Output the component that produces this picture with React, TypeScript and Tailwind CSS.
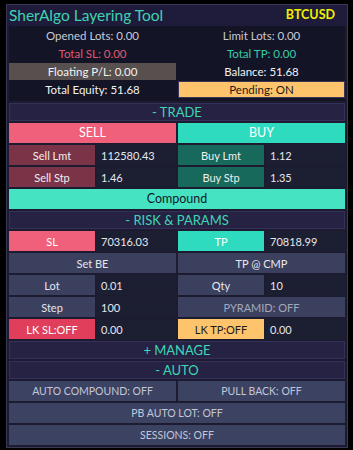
import React from "react";

const font = { fontFamily: "Lato, 'Noto Sans', sans-serif" };

function Header({ text }: { text: string }) {
  return (
    <div className="h-[18px] bg-[#262243] border border-[#34305a] flex items-center justify-center text-[#3fd6b6] text-[13px] leading-none">
      {text}
    </div>
  );
}

function LabelVal({ label, value, labelCls }: { label: string; value: string; labelCls: string }) {
  return (
    <div className="grid grid-cols-[86px_1fr] gap-[2px] h-[20px]">
      <div className={`flex items-center justify-center ${labelCls}`}>{label}</div>
      <div className="flex items-center pl-[4px] bg-[#1b1f31] text-[#e6e6ee]">{value}</div>
    </div>
  );
}

export default function App() {
  return (
    <div className="w-[353px] h-[450px] bg-black pt-[4px] pl-[6px] text-[11px] leading-none" style={font}>
      <div className="w-[342px] h-[444px] border border-[#3a3858] bg-[#1c1b2f] flex flex-col">
        <div className="h-[22px] bg-[#1f1b3a] flex items-center justify-between pl-[2px] pr-[12px]">
          <span className="text-[#3ed3b4] text-[15.5px]">SherAlgo Layering Tool</span>
          <span className="text-[#f2f000] text-[12.5px] font-bold">BTCUSD</span>
        </div>
        <div className="px-[2px] flex flex-col gap-[2px] flex-1 pb-[2px]">
          <div className="bg-[#131426] grid grid-cols-2 gap-x-[2px] gap-y-[1px] pt-[1px] pb-[3px] text-[11.5px]">
            <div className="h-[17px] flex items-center justify-center text-[#c9cad6]">Opened Lots: 0.00</div>
            <div className="h-[17px] flex items-center justify-center text-[#c9cad6]">Limit Lots: 0.00</div>
            <div className="h-[17px] flex items-center justify-center text-[#e2566e]">Total SL: 0.00</div>
            <div className="h-[17px] flex items-center justify-center text-[#39cbab]">Total TP: 0.00</div>
            <div className="h-[17px] flex items-center justify-center bg-[#57504f] text-[#f2f2f2]">Floating P/L: 0.00</div>
            <div className="h-[17px] flex items-center justify-center text-[#f2f2f2]">Balance: 51.68</div>
            <div className="h-[17px] flex items-center justify-center text-[#f2f2f2]">Total Equity: 51.68</div>
            <div className="h-[17px] flex items-center justify-center bg-[#fec46b] border border-[#3a3555] text-[#1a1a1a]">Pending: ON</div>
          </div>

          <Header text="- TRADE" />
          <div className="grid grid-cols-2 gap-[2px] h-[20px] text-[12.5px]">
            <div className="bg-[#f1607a] text-white flex items-center justify-center">SELL</div>
            <div className="bg-[#2edbbf] text-white flex items-center justify-center">BUY</div>
          </div>
          <div className="grid grid-cols-2 gap-[2px]">
            <LabelVal label="Sell Lmt" value="112580.43" labelCls="bg-[#7b3447] text-[#f0f0f0]" />
            <LabelVal label="Buy Lmt" value="1.12" labelCls="bg-[#17695b] text-[#f0f0f0]" />
          </div>
          <div className="grid grid-cols-2 gap-[2px]">
            <LabelVal label="Sell Stp" value="1.46" labelCls="bg-[#7b3447] text-[#f0f0f0]" />
            <LabelVal label="Buy Stp" value="1.35" labelCls="bg-[#17695b] text-[#f0f0f0]" />
          </div>
          <div className="h-[20px] bg-[#46e3c2] text-[#15172a] flex items-center justify-center text-[12.5px]">Compound</div>

          <Header text="- RISK & PARAMS" />
          <div className="grid grid-cols-2 gap-[2px]">
            <LabelVal label="SL" value="70316.03" labelCls="bg-[#f1607a] text-white" />
            <LabelVal label="TP" value="70818.99" labelCls="bg-[#2edbbf] text-white" />
          </div>
          <div className="grid grid-cols-2 gap-[2px] h-[20px]">
            <div className="bg-[#3b405f] text-[#e6e6ee] flex items-center justify-center">Set BE</div>
            <div className="bg-[#3b405f] text-[#e6e6ee] flex items-center justify-center">TP @ CMP</div>
          </div>
          <div className="grid grid-cols-2 gap-[2px]">
            <LabelVal label="Lot" value="0.01" labelCls="bg-[#3b405f] text-[#e6e6ee]" />
            <LabelVal label="Qty" value="10" labelCls="bg-[#3b405f] text-[#e6e6ee]" />
          </div>
          <div className="grid grid-cols-2 gap-[2px]">
            <LabelVal label="Step" value="100" labelCls="bg-[#3b405f] text-[#e6e6ee]" />
            <div className="h-[20px] bg-[#3b405f] text-[#a4a8bc] flex items-center justify-center">PYRAMID: OFF</div>
          </div>
          <div className="grid grid-cols-2 gap-[2px]">
            <LabelVal label="LK SL:OFF" value="0.00" labelCls="bg-[#e03e5a] text-white" />
            <LabelVal label="LK TP:OFF" value="0.00" labelCls="bg-[#fec46b] text-[#1a1a1a]" />
          </div>
          <Header text="+ MANAGE" />
          <Header text="- AUTO" />
          <div className="grid grid-cols-2 gap-[2px] h-[20px] text-[10.5px]">
            <div className="bg-[#3b4262] text-[#c3c7d9] flex items-center justify-center">AUTO COMPOUND: OFF</div>
            <div className="bg-[#3b4262] text-[#c3c7d9] flex items-center justify-center">PULL BACK: OFF</div>
          </div>
          <div className="h-[20px] bg-[#3b4262] text-[#c3c7d9] text-[10.5px] flex items-center justify-center">PB AUTO LOT: OFF</div>
          <div className="h-[20px] bg-[#3b4262] text-[#c3c7d9] text-[10.5px] flex items-center justify-center">SESSIONS: OFF</div>
        </div>
      </div>
    </div>
  );
}
